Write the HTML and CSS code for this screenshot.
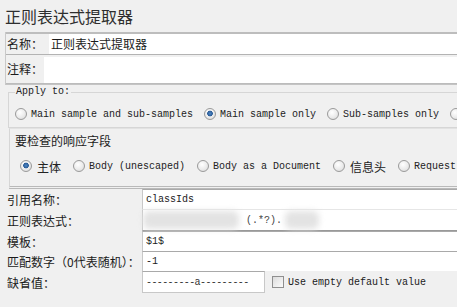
FILE: index.html
```html
<!DOCTYPE html>
<html lang="zh-CN">
<head>
    <meta charset="UTF-8">
    <meta name="viewport" content="width=device-width, initial-scale=1.0">
    <title>正则表达式提取器</title>
    <link rel="stylesheet" href="styles.css">
</head>
<body>

    <div class="title">正则表达式提取器</div>

    <!-- Name / comment -->
    <div class="panel">
        <div class="row name-row">
            <label class="lbl">名称：</label>
            <div class="field">正则表达式提取器</div>
        </div>
        <div class="row comment-row">
            <label class="lbl">注释：</label>
            <div class="field"></div>
        </div>
    </div>

    <!-- Apply to -->
    <fieldset class="apply">
        <legend>Apply to:</legend>
        <div class="radios">
            <span class="opt"><i class="radio"></i>Main sample and sub-samples</span>
            <span class="opt"><i class="radio on"></i>Main sample only</span>
            <span class="opt"><i class="radio"></i>Sub-samples only</span>
            <span class="opt"><i class="radio"></i></span>
        </div>
    </fieldset>

    <!-- Response field -->
    <div class="fields">
        <div class="group-title">要检查的响应字段</div>
        <div class="radios">
            <span class="opt cn"><i class="radio on"></i>主体</span>
            <span class="opt"><i class="radio"></i>Body (unescaped)</span>
            <span class="opt"><i class="radio"></i>Body as a Document</span>
            <span class="opt cn"><i class="radio"></i>信息头</span>
            <span class="opt"><i class="radio"></i>Request</span>
        </div>
    </div>

    <!-- Extractor settings -->
    <div class="form">
        <label class="flbl r20">引用名称：</label>
        <div class="input">classIds</div>

        <label class="flbl r22">正则表达式：</label>
        <div class="input regex"><span class="smear s1"></span>(.*?).<span class="smear s2"></span></div>

        <label class="flbl r20">模板：</label>
        <div class="input">$1$</div>

        <label class="flbl r20">匹配数字（0代表随机）：</label>
        <div class="input">-1</div>

        <label class="flbl r22">缺省值：</label>
        <div class="default-row">
            <div class="input short">---------a---------</div>
            <span class="check"><i class="box"></i>Use empty default value</span>
        </div>
    </div>

</body>
</html>
```

FILE: styles.css
```css
/* Reset */
* {
    box-sizing: border-box;
    margin: 0;
    padding: 0;
}

body {
    width: 457px;
    height: 307px;
    overflow: hidden;
    background: #f0f0f0;
    color: #1b1b1b;
    font-family: "Noto Sans CJK SC", sans-serif;
    font-size: 12px;
    white-space: nowrap;
}

.title {
    height: 32px;
    padding: 6px 0 0 5px;
    font-size: 16px;
    line-height: 20px;
    color: #2e2e2e;
}

/* Name and comment panel */
.panel {
    margin-left: 5px;
    width: 470px;
    border-left: 1px solid #c9c9c9;
    border-bottom: 1px solid #c4c4c4;
}

.row {
    display: flex;
    align-items: stretch;
}

.lbl {
    padding-left: 1px;
    line-height: 20px;
}

.field {
    flex: 1;
    background: #fff;
    line-height: 20px;
}

.name-row {
    height: 23px;
    border-top: 2px solid #bdbdbd;
    border-bottom: 1px solid #b3b3b3;
}

.name-row .field {
    margin-left: 6px;
    padding-left: 2px;
}

.comment-row {
    height: 29px;
    border-bottom: 1px solid #bcbcbc;
}

.comment-row .lbl {
    line-height: 28px;
}

.comment-row .field {
    margin: 2px 0 0 1px;
}

/* Radio groups */
.apply {
    margin: 1px 0 0 8px;
    width: 470px;
    padding: 8px 0 5px 6px;
    border: 1px solid #d6d6d6;
    border-right: none;
}

.apply legend {
    padding: 0 1px;
    font-family: "Liberation Mono", monospace;
    font-size: 10px;
    line-height: 12px;
    color: #222;
}

.radios {
    display: flex;
    align-items: center;
    gap: 11px;
    height: 16px;
}

.opt {
    display: flex;
    align-items: center;
    gap: 4px;
    font-family: "Liberation Mono", monospace;
    font-size: 10px;
    color: #222;
}

.opt.cn {
    font-family: "Noto Sans CJK SC", sans-serif;
    font-size: 12px;
    gap: 5px;
}

.radio {
    display: inline-block;
    width: 12px;
    height: 12px;
    border-radius: 50%;
    border: 1px solid #9a9a9a;
    background: radial-gradient(circle at 40% 35%, #ffffff 0, #e9e9e9 60%, #d2d2d2 100%);
}

.radio.on {
    background:
        radial-gradient(circle at 50% 45%, #4f87c6 0, #2b5d98 2.5px, transparent 3.2px),
        radial-gradient(circle at 40% 35%, #ffffff 0, #e9e9e9 60%, #d2d2d2 100%);
}

.fields {
    margin-left: 9px;
    width: 470px;
    height: 61px;
    padding: 4px 0 0 5px;
    border-left: 1px solid #d6d6d6;
    border-top: 1px solid #e2e2e2;
    border-bottom: 3px double #b9b9b9;
}

.group-title {
    line-height: 16px;
    margin-bottom: 9px;
}

.fields .radios {
    gap: 12px;
    padding-left: 5px;
}

/* Settings form */
.form {
    display: grid;
    grid-template-columns: 142px 330px;
}

.flbl {
    padding-left: 7px;
    display: flex;
    align-items: center;
}

.r20 {
    height: 20px;
}

.r22 {
    height: 22px;
}

.input {
    background: #fff;
    border-top: 1px solid #a9a9a9;
    border-left: 1px solid #c8c8c8;
    padding-left: 3px;
    font-family: "Liberation Mono", monospace;
    font-size: 10px;
    display: flex;
    align-items: center;
}

.regex {
    border-top-color: #e6e6e6;
    border-bottom: 1px solid #999;
    padding-left: 0;
    color: #444;
}

.smear {
    display: inline-block;
    height: 18px;
    background: #e3e3e3;
    filter: blur(3px);
    border-radius: 6px;
}

.smear.s1 {
    width: 96px;
    margin-right: 7px;
}

.smear.s2 {
    width: 34px;
    margin-left: 3px;
}

.default-row {
    display: flex;
    align-items: stretch;
}

.short {
    width: 123px;
    border-bottom: 1px solid #c8c8c8;
    border-right: 1px solid #c8c8c8;
    letter-spacing: -0.6px;
    color: #333;
}

.check {
    display: flex;
    align-items: center;
    gap: 4px;
    margin-left: 7px;
    font-family: "Liberation Mono", monospace;
    font-size: 10px;
}

.box {
    display: inline-block;
    width: 12px;
    height: 12px;
    border: 1px solid #8f8f8f;
    background: linear-gradient(135deg, #dcdcdc, #fbfbfb);
}
```
